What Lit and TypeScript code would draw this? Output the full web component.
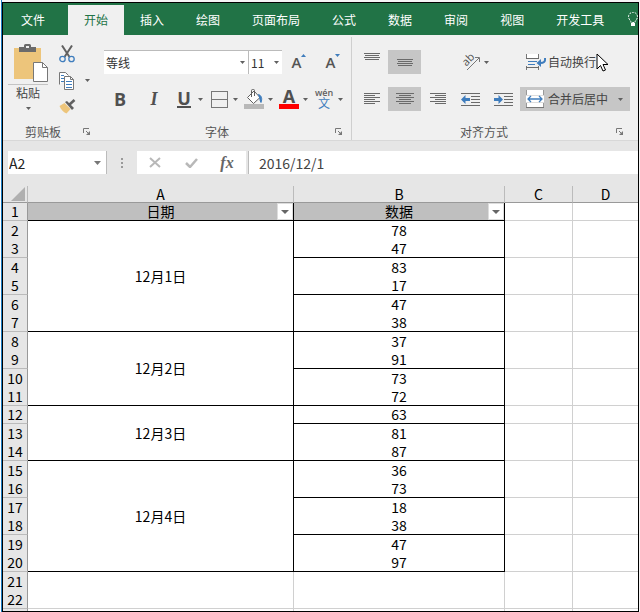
import { LitElement, html, css, svg, nothing } from "lit";
import { customElement, state } from "lit/decorators.js";
import { classMap } from "lit/directives/class-map.js";

const TABS = ["文件", "开始", "插入", "绘图", "页面布局", "公式", "数据", "审阅", "视图", "开发工具"];

interface Row {
  n: number;
  value?: number;
  end?: boolean;
  date?: string;
  span?: number;
}

const ROWS: Row[] = [
  { n: 2, value: 78, date: "12月1日", span: 6 },
  { n: 3, value: 47, end: true },
  { n: 4, value: 83 },
  { n: 5, value: 17, end: true },
  { n: 6, value: 47 },
  { n: 7, value: 38, end: true },
  { n: 8, value: 37, date: "12月2日", span: 4 },
  { n: 9, value: 91, end: true },
  { n: 10, value: 73 },
  { n: 11, value: 72, end: true },
  { n: 12, value: 63, end: true, date: "12月3日", span: 3 },
  { n: 13, value: 81 },
  { n: 14, value: 87, end: true },
  { n: 15, value: 36, date: "12月4日", span: 6 },
  { n: 16, value: 73, end: true },
  { n: 17, value: 18 },
  { n: 18, value: 38, end: true },
  { n: 19, value: 47 },
  { n: 20, value: 97, end: true },
];

const icon = (w: number, h: number, body: unknown) =>
  html`<svg width=${w} height=${h} viewBox="0 0 ${w} ${h}" aria-hidden="true">${body}</svg>`;

const caret = () => icon(5, 3, svg`<path d="M0 0h5L2.500 3z" fill="#606060"/>`);

/* Horizontal text lines given as [x, y, length]. */
const lines = (list: number[][], color = "#6a6a6a") =>
  list.map(([x, y, w]) => svg`<rect x=${x} y=${y} width=${w} height="1" fill=${color} />`);

const launcher = () =>
  icon(8, 8, svg`<path d="M0.500 5V0.500H6" fill="none" stroke="#777"/><path d="M3 3l3 3" stroke="#777"/><path d="M7 3v4H3z" fill="#777"/>`);

const pasteIcon = () => icon(36, 38, svg`
  <rect x="1" y="4" width="27" height="31" fill="#edc57b"/>
  <path d="M6 8V3h5V1.500a1.500 1.500 0 0 1 1.500-1.500h4A1.500 1.500 0 0 1 18 1.500V3h5v5z" fill="#6b6b6b"/>
  <rect x="13" y="2" width="3" height="2" fill="#f0f0f0"/>
  <path d="M20.500 18.500h9l5 5v14h-14z" fill="#fff" stroke="#777"/>
  <path d="M29.500 18.500v5h5" fill="none" stroke="#777"/>`);

const cutIcon = () => icon(16, 18, svg`
  <path d="M3 0.500L10.500 12M13 0.500L5.500 12" stroke="#606060" stroke-width="2" fill="none"/>
  <circle cx="3.500" cy="14" r="2.700" fill="none" stroke="#3f7dbd" stroke-width="1.300"/>
  <circle cx="12.500" cy="14" r="2.700" fill="none" stroke="#3f7dbd" stroke-width="1.300"/>`);

const copyIcon = () => icon(16, 18, svg`
  <path d="M0.500 12.500V0.500h6l3 3" fill="#fff" stroke="#777"/>
  <path d="M5.500 4.500h6l3 3v10h-9z" fill="#fff" stroke="#777"/>
  <path d="M11.500 4.500v3h3" fill="none" stroke="#777"/>
  ${lines([[2, 3, 3], [2, 6, 3], [2, 9, 3], [7, 9, 6], [7, 12, 6], [7, 15, 6]], "#3f7dbd")}`);

const brushIcon = () => icon(18, 15, svg`
  <path d="M0.500 7l5-3 6 6-4 4.500C4 13 2 10.500 0.500 7z" fill="#edc57b"/>
  <path d="M6 3l2-1 7 7-2 2z" fill="#606060"/>
  <path d="M10.500 5.500L15.500 1" stroke="#606060" stroke-width="2.600"/>`);

const bordersIcon = () => icon(17, 17, svg`
  <path d="M0.500 0v17M16.500 0v17M0 0.500h17M0 16.500h17M1 8.500h16" stroke="#777" fill="none"/>`);

const fillIcon = () => icon(20, 20, svg`
  <path d="M3.500 8.500L10 2l6 6.500-6.500 6z" fill="#fff" stroke="#606060"/>
  <path d="M7.500 8V1.500A1 1 0 0 1 8.500 0.500h1a1 1 0 0 1 1 1V7" fill="none" stroke="#606060"/>
  <path d="M14.500 5.500c3 1 4 4 2.500 8-1.500-2-0.500-4-2.500-8z" fill="#3f7dbd" stroke="#3f7dbd"/>
  <rect x="0" y="15" width="20" height="5" fill="#b8b8b8"/>`);

const topAlign = () => icon(16, 18, lines([[0, 0, 16], [1, 2, 14], [0, 4, 16], [1, 6, 14]]));
const midAlign = () => icon(16, 7, lines([[0, 0, 16], [1, 2, 14], [0, 4, 16], [1, 6, 14]]));
const leftAlign = () => icon(16, 12, lines([[0, 0, 16], [0, 2, 11], [0, 4, 16], [0, 6, 11], [0, 8, 16], [0, 10, 11]]));
const centerAlign = () => icon(18, 12, lines([[0, 0, 18], [3, 2, 12], [0, 4, 18], [3, 6, 12], [0, 8, 18], [3, 10, 12]]));
const rightAlign = () => icon(16, 12, lines([[0, 0, 16], [5, 2, 11], [0, 4, 16], [5, 6, 11], [0, 8, 16], [5, 10, 11]]));

const indentIcon = (inward: boolean) => icon(19, 13, svg`
  ${lines([[0, 0, 19], [10, 3, 9], [10, 6, 9], [10, 9, 9], [0, 12, 19]])}
  <path d=${inward ? "M9 6.500L4.500 2v3H0v3h4.500v3z" : "M0 6.500L4.500 2v3H9v3H4.500v3z"} fill="#3f7dbd"/>`);

const angleIcon = () => icon(22, 22, svg`
  <g transform="rotate(-45 8 10)"><text x="2" y="12" font-family="Open Sans, sans-serif" font-size="11" fill="#505050">ab</text></g>
  <path d="M6 19L18 7M14 6.500h4.500V11" fill="none" stroke="#777"/>`);

const wrapIcon = () => icon(20, 16, svg`
  <path d="M0.500 0v4M0.500 12v4M12.500 0v4M12.500 12v4" stroke="#777"/>
  <rect x="1" y="0" width="11" height="4" fill="#fff"/>
  ${lines([[0, 4, 13], [0, 13, 13]])}
  ${lines([[2, 7, 9], [2, 10, 7]], "#3f7dbd")}
  <path d="M19 4c0.500 4-1.500 5-4.500 5" fill="none" stroke="#3f7dbd" stroke-width="2"/>
  <path d="M10.500 9l4.500-4v8z" fill="#3f7dbd"/>`);

const mergeIcon = () => icon(18, 18, svg`
  <rect width="18" height="18" fill="#fff"/>
  <path d="M0.500 0v5M17.500 0v5M0.500 13v5M17.500 13v5" stroke="#999"/>
  <path d="M0 5.500h18M0 12.500h18" stroke="#ddd"/>
  <path d="M0 17.500h18" stroke="#777"/>
  <path d="M2 9h14M5 6L2 9l3 3M13 6l3 3-3 3" fill="none" stroke="#3f7dbd" stroke-width="1.300"/>`);

const bulbIcon = () => icon(10, 16, svg`
  <path d="M3 10.500C3 8.500 0.500 7.500 0.500 4.800a4.500 4.500 0 0 1 9 0C9.500 7.500 7 8.500 7 10.500z" fill="none" stroke="#fff" stroke-dasharray="2 1"/>
  <rect x="3" y="11" width="4" height="3" fill="#fff"/>`);

@customElement("app-root")
export class AppRoot extends LitElement {
  @state() private activeTab = "开始";
  @state() private formula = "2016/12/1";

  static styles = css`
    * { box-sizing: border-box; }
    :host {
      display: block;
      min-height: 100vh;
      box-sizing: border-box;
      padding: 2px 1px 0 2px;
      background: linear-gradient(90deg, #fff 1px, #1f7fc4 1px 2px, #f4f4f4 2px);
      font: 12px/16px "Noto Sans CJK SC", sans-serif;
      color: #444;
    }
    .window {
      position: relative;
      display: flex;
      flex-direction: column;
      min-height: calc(100vh - 2px);
      border: 1px solid #000;
      background: #fff;
      overflow: hidden;
    }
    svg { display: block; flex: none; }
    button, input, select {
      font: inherit;
      color: inherit;
      margin: 0;
      padding: 0;
      border: 0;
      background: none;
      border-radius: 0;
      outline: none;
    }
    .tabs {
      display: flex;
      height: 32px;
      padding-top: 2px;
      background: #217346;
      overflow: hidden;
    }
    .tab {
      flex: none;
      padding: 0 16px;
      color: #fff;
      white-space: nowrap;
    }
    .tab.file { padding: 0 23px 0 18px; }
    .tab.active { background: #f0f0f0; color: #217346; }
    .tell { flex: none; padding: 0 8px; }
    .ribbon {
      display: flex;
      height: 106px;
      padding-top: 2px;
      background: #f0f0f0;
      border-bottom: 1px solid #d8d8d8;
    }
    .group {
      display: flex;
      flex-direction: column;
      justify-content: space-between;
      flex: none;
    }
    .clip { width: 96px; }
    .font { width: 253px; border-right: 1px solid #cfcfcf; }
    .align { flex: 1 0 286px; }
    .group-foot {
      display: grid;
      grid-template-columns: 1fr 16px;
      align-items: center;
      height: 16px;
      color: #555;
      text-align: center;
    }
    .align .group-foot { max-width: 280px; }
    .clip-body {
      display: grid;
      grid-template-columns: 48px 32px 8px;
      align-items: start;
      padding: 7px 0 0 2px;
    }
    .paste {
      display: flex;
      flex-direction: column;
      align-items: flex-start;
      padding-left: 3px;
      width: 44px;
      gap: 2px;
    }
    .paste svg { align-self: flex-end; }
    .paste .label { width: 40px; border-top: 1px solid #c4c4c4; text-align: center; }
    .paste .caret { display: flex; justify-content: center; width: 40px; margin-top: 4px; }
    .small {
      display: grid;
      gap: 9px;
      justify-items: start;
      padding: 1px 0 0 6px;
    }
    .copy-more { align-self: center; margin-top: 2px; }
    .rows { display: grid; gap: 13px; padding-top: 13px; }
    .font .rows { padding-left: 5px; }
    .row { display: flex; align-items: center; height: 24px; }
    .row.marks { gap: 2px; }
    .combo {
      display: grid;
      align-items: center;
      height: 24px;
      background: #fff;
      border-top: 1px solid #bbb;
      color: #333;
    }
    .combo > * { grid-area: 1 / 1; }
    .combo svg { justify-self: end; margin-right: 3px; pointer-events: none; }
    .combo select {
      appearance: none;
      width: 100%;
      height: 100%;
      padding-left: 2px;
    }
    .family { width: 145px; border-right: 1px solid #bbb; }
    .size { width: 33px; }
    .btn { display: flex; align-items: center; justify-content: center; width: 34px; height: 24px; }
    .btn.letter { width: 32px; }
    .grow { font: 600 15px/24px "Open Sans", sans-serif; color: #555; }
    .grow svg { align-self: start; margin-top: 4px; }
    .letter { font: 700 18px/24px "Open Sans", sans-serif; color: #505050; }
    .italic { font-style: italic; font-family: "Liberation Serif", serif; }
    .split { display: flex; align-items: center; height: 24px; width: 33px; }
    .split .face { display: flex; justify-content: center; width: 24px; }
    .split .caret { padding: 0 2px; }
    .under { border-bottom: 2px solid #505050; line-height: 15px; }
    .color {
      border-bottom: 5px solid #f00;
      width: 20px;
      text-align: center;
      font-size: 18px;
      line-height: 15px;
    }
    .pinyin { display: grid; justify-items: center; font: 600 9px/8px "Open Sans", sans-serif; color: #606060; }
    .pinyin .han { color: #3f7dbd; font: 12px/12px "Noto Sans CJK SC", sans-serif; }
    .align-grid {
      display: grid;
      grid-template-columns: repeat(5, 33px) 110px;
      grid-auto-rows: 24px;
      gap: 13px 0;
      padding: 13px 0 0 3px;
    }
    .align-grid button { display: flex; align-items: center; justify-content: center; }
    .align-grid .on { background: #c6c6c6; }
    .align-grid .angle { grid-column: 4 / 6; justify-content: flex-start; padding-left: 7px; gap: 1px; }
    .align-grid .wide { justify-content: flex-start; padding: 0 7px 0 6px; gap: 4px; white-space: nowrap; color: #444; }
    .align-grid .wide.wrap { gap: 2px; }
    .wide .caret { margin-left: auto; }
    .formula-bar {
      display: flex;
      align-items: center;
      height: 45px;
      padding: 10px 0 12px 5px;
      background: #e6e6e6;
      font-size: 14px;
      color: #333;
    }
    .formula-bar > * { height: 23px; }
    .name-box {
      display: flex;
      align-items: center;
      width: 99px;
      padding-right: 5px;
      background: #fff;
      border-right: 1px solid #bbb;
      color: #222;
    }
    .name-box input { flex: 1; min-width: 0; padding-left: 1px; }
    .dots { display: flex; align-items: center; justify-content: center; width: 30px; }
    .tools {
      display: flex;
      align-items: center;
      width: 109px;
      background: #fff;
    }
    .tools button { display: flex; justify-content: center; width: 36px; }
    .tools .fx { font: italic 700 16px/20px "Liberation Serif", serif; color: #666; }
    .formula-bar .formula {
      flex: 1;
      min-width: 0;
      margin-left: 2px;
      padding-left: 10px;
      background: #fff;
      border-left: 1px solid #bbb;
      color: #444;
    }
    .sheet {
      width: 100%;
      table-layout: fixed;
      border-collapse: separate;
      border-spacing: 0;
      font-size: 14px;
      line-height: 17px;
      color: #000;
      text-align: center;
    }
    .c-num { width: 25px; }
    .c-a { width: 266px; }
    .c-b { width: 211px; }
    .c-c { width: 68px; }
    th, td { padding: 0; font-weight: 400; border: 0 solid #d0d0d0; border-right-width: 1px; height: 18px; }
    tr > :last-child { border-right-width: 0; }
    .first th, .first td { height: 19px; }
    .cols th { height: 17px; line-height: 16px; background: #e6e6e6; border-color: #999; border-right-color: #bbb; border-bottom-width: 1px; }
    .corner svg { margin-left: auto; margin-right: 2px; }
    .num { background: #e6e6e6; border-right-color: #999; border-bottom-color: #bbb; }
    .end { border-bottom-width: 1px; }
    .ink { border-color: #000; }
    .head { position: relative; background: #bfbfbf; }
    .filter {
      position: absolute;
      right: 0;
      top: 0;
      display: flex;
      align-items: center;
      justify-content: center;
      width: 16px;
      height: 17px;
      background: #fff;
      border: 1px solid #ddd;
    }
    .tail th, .tail td { height: 2px; line-height: 2px; }
    .pointer { position: absolute; left: 593px; top: 50px; pointer-events: none; }
  `;

  private foot(label: string) {
    return html`<div class="group-foot">
      <span>${label}</span>
      <button aria-label="${label}设置">${launcher()}</button>
    </div>`;
  }

  private split(label: string, face: unknown) {
    return html`<button class="split" aria-label=${label}>
      <span class="face">${face}</span><span class="caret">${caret()}</span>
    </button>`;
  }

  private headCell(label: string) {
    return html`<td class="head ink end">${label}<button class="filter" aria-label="筛选${label}">
      ${icon(8, 4, svg`<path d="M0 0h8L4 4z" fill="#666"/>`)}</button></td>`;
  }

  private row(r: Row) {
    const edge = classMap({ end: !!r.end });
    return html`<tr class=${classMap({ first: !r.end })}>
      <th scope="row" class="num ${r.end ? "end" : ""}">${r.n}</th>
      ${r.date ? html`<td class="ink end" rowspan=${r.span!}>${r.date}</td>` : nothing}
      <td class="ink ${r.end ? "end" : ""}">${r.value}</td>
      <td class=${edge}></td><td class=${edge}></td>
    </tr>`;
  }

  render() {
    return html`<div class="window">
      <nav class="tabs" role="tablist">
        ${TABS.map((t, i) => html`<button role="tab" aria-selected=${t === this.activeTab}
          class=${classMap({ tab: true, file: i === 0, active: t === this.activeTab })}
          @click=${() => (this.activeTab = t)}>${t}</button>`)}
        <button class="tell" aria-label="告诉我">${bulbIcon()}</button>
      </nav>

      <div class="ribbon">
        <section class="group clip">
          <div class="clip-body">
            <button class="paste">${pasteIcon()}<span class="label">粘贴</span><span class="caret">${caret()}</span></button>
            <div class="small">
              <button aria-label="剪切">${cutIcon()}</button>
              <button aria-label="复制">${copyIcon()}</button>
              <button aria-label="格式刷">${brushIcon()}</button>
            </div>
            <button class="copy-more" aria-label="复制选项">${caret()}</button>
          </div>
          ${this.foot("剪贴板")}
        </section>

        <section class="group font">
          <div class="rows">
            <div class="row">
              <div class="combo family"><select aria-label="字体"><option>等线</option></select>${caret()}</div>
              <div class="combo size"><select aria-label="字号"><option>11</option></select>${caret()}</div>
              <button class="btn grow" aria-label="增大字号">A${icon(5, 3, svg`<path d="M0 3L2.500 0 5 3z" fill="#3f7dbd"/>`)}</button>
              <button class="btn grow" aria-label="减小字号">A${icon(5, 3, svg`<path d="M0 0h5L2.500 3z" fill="#3f7dbd"/>`)}</button>
            </div>
            <div class="row marks">
              <button class="btn letter">B</button>
              <button class="btn letter italic">I</button>
              ${this.split("下划线", html`<span class="letter under">U</span>`)}
              ${this.split("边框", bordersIcon())}
              ${this.split("填充颜色", fillIcon())}
              ${this.split("字体颜色", html`<span class="letter color">A</span>`)}
              ${this.split("拼音", html`<span class="pinyin"><span>wén</span><span class="han">文</span></span>`)}
            </div>
          </div>
          ${this.foot("字体")}
        </section>

        <section class="group align">
          <div class="align-grid">
            <button aria-label="顶端对齐">${topAlign()}</button>
            <button class="on" aria-label="垂直居中">${midAlign()}</button>
            <button class="angle" aria-label="方向">${angleIcon()}${caret()}</button>
            <button class="wide wrap">${wrapIcon()}<span>自动换行</span></button>
            <button aria-label="左对齐">${leftAlign()}</button>
            <button class="on" aria-label="居中">${centerAlign()}</button>
            <button aria-label="右对齐">${rightAlign()}</button>
            <button aria-label="减少缩进量">${indentIcon(false)}</button>
            <button aria-label="增加缩进量">${indentIcon(true)}</button>
            <button class="wide on">${mergeIcon()}<span>合并后居中</span><span class="caret">${caret()}</span></button>
          </div>
          ${this.foot("对齐方式")}
        </section>
      </div>

      <div class="formula-bar">
        <div class="name-box">
          <input aria-label="名称框" value="A2" />
          <button aria-label="名称列表">${icon(7, 4, svg`<path d="M0 0h7L3.500 4z" fill="#777"/>`)}</button>
        </div>
        <div class="dots">${icon(2, 10, svg`<path d="M0 0h2v2H0zM0 4h2v2H0zM0 8h2v2H0z" fill="#999"/>`)}</div>
        <div class="tools">
          <button aria-label="取消">${icon(12, 11, svg`<path d="M1 1l10 9M11 1L1 10" stroke="#b8b8b8" stroke-width="2"/>`)}</button>
          <button aria-label="输入">${icon(13, 10, svg`<path d="M1 5l4 4L12 1" fill="none" stroke="#b8b8b8" stroke-width="2.500"/>`)}</button>
          <button class="fx">fx</button>
        </div>
        <input class="formula" aria-label="编辑栏" .value=${this.formula}
          @input=${(e: Event) => (this.formula = (e.target as HTMLInputElement).value)} />
      </div>

      <table class="sheet">
        <colgroup><col class="c-num" /><col class="c-a" /><col class="c-b" /><col class="c-c" /><col /></colgroup>
        <thead>
          <tr class="cols">
            <th class="corner">${icon(14, 14, svg`<path d="M14 0v14H0z" fill="#b0b0b0"/>`)}</th>
            ${["A", "B", "C", "D"].map((c) => html`<th scope="col">${c}</th>`)}
          </tr>
        </thead>
        <tbody>
          <tr>
            <th scope="row" class="num end">1</th>
            ${this.headCell("日期")}${this.headCell("数据")}
            <td class="end"></td><td class="end"></td>
          </tr>
          ${ROWS.map((r) => this.row(r))}
          <tr class="first"><th scope="row" class="num">21</th><td></td><td></td><td></td><td></td></tr>
          <tr><th scope="row" class="num end">22</th><td class="end"></td><td class="end"></td><td class="end"></td><td class="end"></td></tr>
          <tr class="tail"><th class="num"></th><td></td><td></td><td></td><td></td></tr>
        </tbody>
      </table>

      <svg class="pointer" width="14" height="20" viewBox="0 0 14 20" aria-hidden="true">
        <path d="M1 1v15l3.500-3.500L7 18l2.500-1-2.500-5.500h5z" fill="#fff" stroke="#000"/>
      </svg>
    </div>`;
  }
}
